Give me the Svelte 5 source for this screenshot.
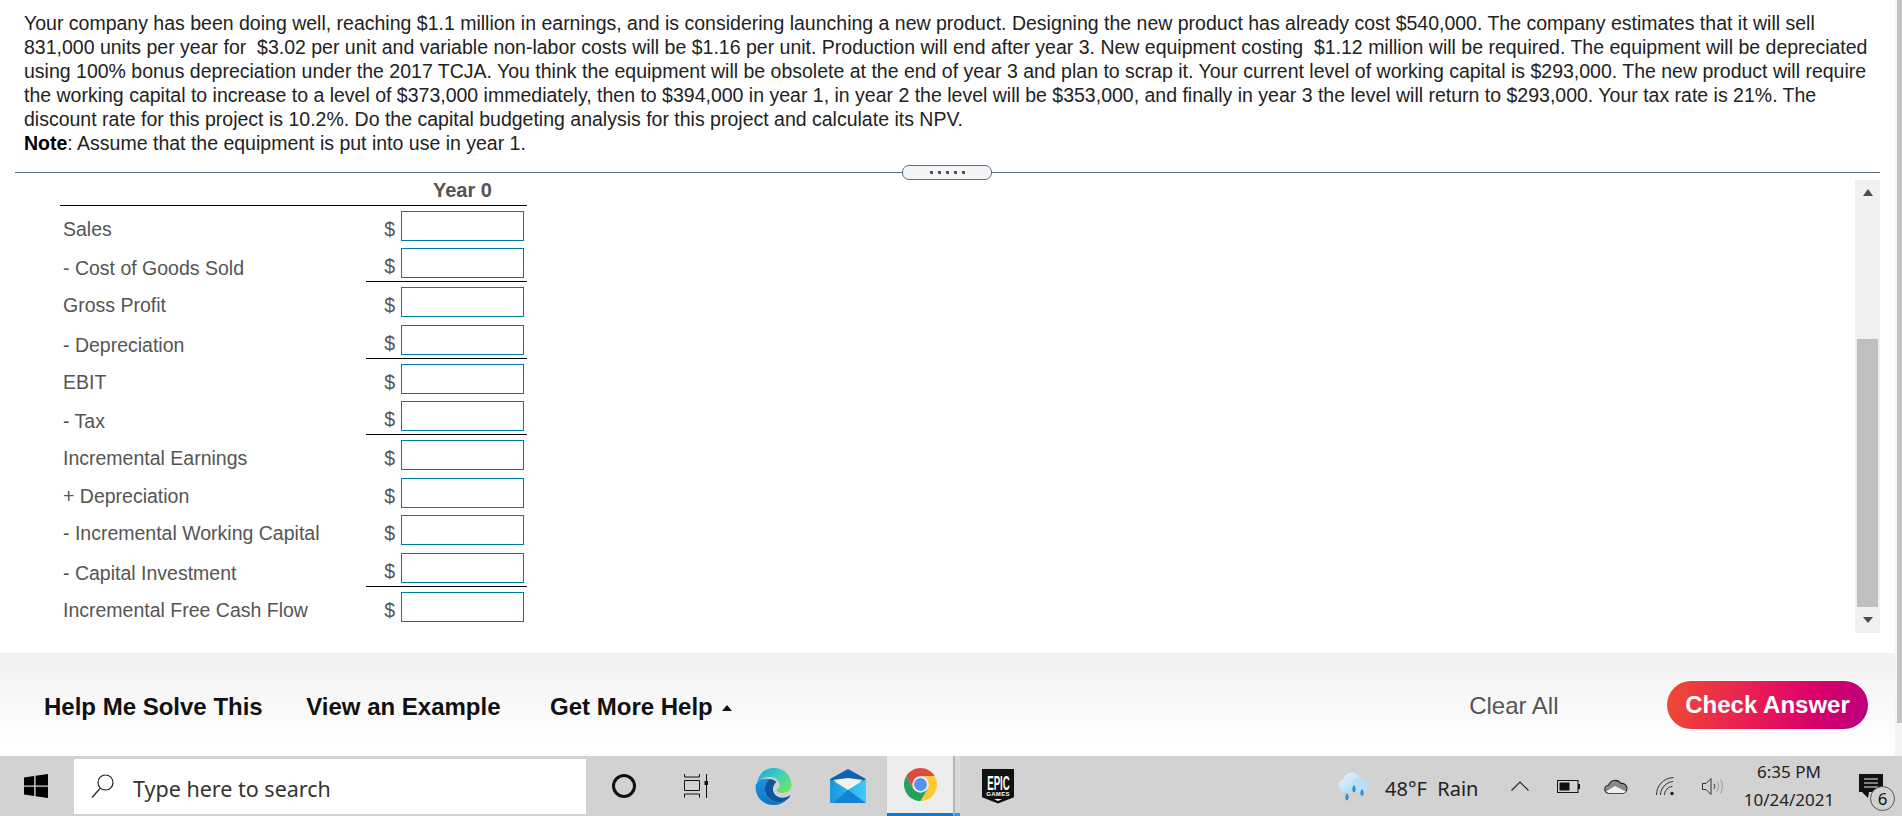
<script>
  const lines = [
    "Your company has been doing well, reaching $1.1 million in earnings, and is considering launching a new product. Designing the new product has already cost $540,000. The company estimates that it will sell",
    "831,000 units per year for \u00a0$3.02 per unit and variable non-labor costs will be $1.16 per unit. Production will end after year 3. New equipment costing \u00a0$1.12 million will be required. The equipment will be depreciated",
    "using 100% bonus depreciation under the 2017 TCJA. You think the equipment will be obsolete at the end of year 3 and plan to scrap it. Your current level of working capital is $293,000. The new product will require",
    "the working capital to increase to a level of $373,000 immediately, then to $394,000 in year 1, in year 2 the level will be $353,000, and finally in year 3 the level will return to $293,000. Your tax rate is 21%. The",
    "discount rate for this project is 10.2%. Do the capital budgeting analysis for this project and calculate its NPV."
  ]

  const rows = [
    { label: "Sales", h: 37 },
    { label: "- Cost of Goods Sold", h: 39, rule: true },
    { label: "Gross Profit", h: 38 },
    { label: "- Depreciation", h: 39, rule: true },
    { label: "EBIT", h: 37 },
    { label: "- Tax", h: 39, rule: true },
    { label: "Incremental Earnings", h: 38 },
    { label: "+ Depreciation", h: 37 },
    { label: "- Incremental Working Capital", h: 38 },
    { label: "- Capital Investment", h: 39, rule: true },
    { label: "Incremental Free Cash Flow", h: 38 }
  ]
</script>

<div class="page">
  <main class="content">
    <section class="question">
      {#each lines as line}
        <div>{line}</div>
      {/each}
      <div><b>Note</b>: Assume that the equipment is put into use in year 1.</div>
    </section>

    <div class="divider">
      <div class="handle">
        {#each Array(5) as _}<i></i>{/each}
      </div>
    </div>

    <section class="work">
      <div class="table">
        <div class="head"><span>Year 0</span></div>
        {#each rows as row}
          <div class="row" class:ruled={row.rule} style="height:{row.h}px">
            <span class="label">{row.label}</span>
            <span class="cell">
              <span class="dollar">$</span>
              <input type="text" aria-label={row.label} />
            </span>
          </div>
        {/each}
      </div>

      <div class="scrollbar">
        <span class="arrow up"></span>
        <div class="track"><div class="thumb"></div></div>
        <span class="arrow down"></span>
      </div>
    </section>

    <footer class="actions">
      <a href="#help">Help Me Solve This</a>
      <a href="#example">View an Example</a>
      <a href="#more">Get More Help <span class="caret"></span></a>
      <span class="spacer"></span>
      <span class="clear">Clear All</span>
      <button class="check">Check Answer</button>
    </footer>
  </main>

  <div class="page-scroll"><div class="page-thumb"></div></div>
</div>

<nav class="taskbar">
  <svg class="win" width="24" height="24" viewBox="0 0 24 24"><path d="M0 3.400l10.200-1.400v9.400H0zM11.600 1.800L24 0v11.400H11.600zM0 12.800h10.200v9.200L0 20.600zM11.600 12.800H24V24l-12.400-1.800z" fill="#000"/></svg>
  <div class="search">
    <svg width="23" height="24" viewBox="0 0 23 24" fill="none" stroke="#222" stroke-width="1.2"><circle cx="14.500" cy="8.500" r="7.500"/><path d="M9 14.500L1 23.500"/></svg>
    <span class="search-text">Type here to search</span>
  </div>
  <span class="cortana"></span>
  <svg class="tv" width="24" height="24" viewBox="0 0 24 24" fill="none" stroke="#111" stroke-width="1"><path d="M.5 0v3h15v-3M.5 6.500h15v10H.5zM.5 23.500v-3.500h15v3.500M22.500 0v7M22.500 11v13"/><rect x="20.500" y="7" width="4" height="4" fill="#111" stroke="none"/></svg>
  <svg class="edge" width="37" height="37" viewBox="0 0 36 37">
    <defs>
      <linearGradient id="eg1" x1="0" y1="0" x2="1" y2=".8"><stop offset="0" stop-color="#1f9fdc"/><stop offset=".5" stop-color="#3dcfc0"/><stop offset="1" stop-color="#78e25e"/></linearGradient>
      <linearGradient id="eg2" x1="0" y1="0" x2=".6" y2="1"><stop offset="0" stop-color="#1a96de"/><stop offset="1" stop-color="#0f72c4"/></linearGradient>
    </defs>
    <path d="M1.500 15C3 5 10 0 18.500 0 29 0 36 8 36 17c0 5-4 8-9 8-3 0-6-1-6-3 0-1 2-1 3-3 1-4-3-10-9-10-6 0-11 2-13.500 6z" fill="url(#eg1)"/>
    <path d="M1.500 15C4 11 9 10 14 11c-5 4-6 11-3 16 3 6 12 10 20 5-3 3-8 5-13 5C7 37 0 28 0 19c0-2 .5-3 1.500-4z" fill="url(#eg2)"/>
    <path d="M14 11c-5 4-6 11-3 16 3 6 12 10 20 5 2-1 3-3 4-5-4 3-11 4-15 0-4-4-3-10 1-13-2-2-5-3-7-3z" fill="#0d559f"/>
  </svg>
  <svg class="mail" width="36" height="34" viewBox="0 0 36 34">
    <defs><linearGradient id="mg" x1="0" y1="0" x2="1" y2="0"><stop offset="0" stop-color="#1b97dc"/><stop offset="1" stop-color="#3ccdf8"/></linearGradient></defs>
    <path d="M0 10L18 0l18 10v3H0z" fill="#0b62b0"/>
    <path d="M3 11l15-2 15 2-15 10z" fill="#f3f3f3"/>
    <path d="M0 10l18 11 18-11v24H1a1 1 0 0 1-1-1z" fill="url(#mg)"/>
    <path d="M18 21L36 34H3z" fill="#1682d2"/>
  </svg>
  <div class="chrome-tab">
    <svg width="33" height="33" viewBox="0 0 34 34">
      <path d="M17 17L9.600 21.300 2.300 8.500A17 17 0 0 1 31.700 8.500H17z" fill="#db4d3f"/>
      <path d="M17 17V8.500H31.700A17 17 0 0 1 17 34L24.400 21.300z" fill="#fcc934"/>
      <path d="M17 17L24.400 21.300 17 34A17 17 0 0 1 2.300 8.500L9.600 21.300z" fill="#1fa35f"/>
      <circle cx="17" cy="17" r="8.500" fill="#f1f1f1"/>
      <circle cx="17" cy="17" r="6.600" fill="#5b8ff0"/>
    </svg>
  </div>
  <div class="tab-edge"></div>
  <div class="epic">
    <span class="epic-name">EPIC</span>
    <span class="epic-sub">GAMES</span>
    <span class="epic-mark"></span>
  </div>

  <span class="spacer"></span>

  <svg class="cloud" width="32" height="30" viewBox="0 0 32 30">
    <defs><linearGradient id="cg" x1="0" y1="0" x2="1" y2="1"><stop offset="0" stop-color="#e8f5fd"/><stop offset="1" stop-color="#a5d4f4"/></linearGradient></defs>
    <path d="M7 21a6.500 6.500 0 0 1-1.500-12.800A8.500 8.500 0 0 1 21 5.500a6.500 6.500 0 0 1 5 3 6.500 6.500 0 0 1 0 12.500z" fill="url(#cg)"/>
    <path d="M14 15a7 7 0 0 1 12-6.500A6.500 6.500 0 0 1 26 21H13a3 3 0 0 1 1-6z" fill="#b9def7"/>
    <path d="M9 22c2 2.500 2.500 6.500 0 7.500-2.500-1-2-5 0-7.500zM16 14c2 2.500 2.500 6.500 0 7.500-2.500-1-2-5 0-7.500zM24 18c2 2.500 2.500 6 0 7-2.500-1-2-4.500 0-7z" fill="#2f8fd8"/>
  </svg>
  <span class="weather">48°F&nbsp; Rain</span>
  <svg class="chev" width="18" height="10" viewBox="0 0 18 10" fill="none" stroke="#222" stroke-width="1.100"><path d="M.5 9.500L9 1l8.500 8.500"/></svg>
  <svg class="batt" width="23" height="13" viewBox="0 0 23 13"><rect x=".5" y=".5" width="20.500" height="12" fill="none" stroke="#111"/><rect x="2.500" y="2.500" width="10" height="8" fill="#111"/><rect x="21" y="4" width="2" height="5" fill="#111"/></svg>
  <svg class="drive" width="24" height="16" viewBox="0 0 24 16"><path d="M5 15.300a4 4 0 0 1-.5-8A7 7 0 0 1 17 5.500a5 5 0 0 1 2 9.800z" fill="#8a8a8a" stroke="#222" stroke-width="1.100"/><path d="M2 13.500l9-5.500 5 2.500 6 3-2 1.500H5z" fill="#efefef"/></svg>
  <svg class="wifi" width="18" height="18" viewBox="0 0 18 18" fill="none" stroke="#333" stroke-width="1"><path d="M.5 18C.5 9 7 1 17.500.5M4.500 18C4.500 11.500 10 5 17 4.500M8.500 18c0-4 3.500-8.500 8-8.500"/><circle cx="16" cy="16.500" r="1.700" fill="#222" stroke="none"/></svg>
  <svg class="vol" width="22" height="19" viewBox="0 0 22 19" fill="none" stroke="#333" stroke-width="1"><path d="M.5 6.500h3.500l5-5v16l-5-5H.5z"/><path d="M12 7c1 1.500 1 3.500 0 5"/><path d="M15 4.500c2 3 2 7 0 10M18.500 2.500c2.500 4 2.500 10 0 14" stroke="#999"/></svg>
  <div class="clock"><div>6:35 PM</div><div>10/24/2021</div></div>
  <div class="notify">
    <svg width="24" height="24" viewBox="0 0 24 24"><path d="M0 0h24v18H10l-1 6-6-6H0z" fill="#111"/><path d="M5 5h14M5 9h14M5 13h14" stroke="#eee" stroke-width="1"/></svg>
    <span class="badge">6</span>
  </div>
</nav>

<style>
  :global(body) {
    margin: 0;
    background: #fff;
    overflow: hidden;
  }
  .page {
    display: flex;
    height: 756px;
    font-family: "Liberation Sans", Arial, sans-serif;
  }
  .content {
    flex: 1;
    display: flex;
    flex-direction: column;
    min-width: 0;
  }
  .question {
    padding: 11px 0 0 24px;
    height: 161px;
    box-sizing: border-box;
    font-size: 19.500px;
    line-height: 24px;
    color: #222;
    white-space: nowrap;
  }
  .question b {
    color: #000;
  }
  .divider {
    position: relative;
    margin: 11px 15px 0 15px;
    height: 1px;
    background: #5c6f7f;
  }
  .handle {
    position: absolute;
    left: 887px;
    top: -7px;
    width: 90px;
    height: 15px;
    box-sizing: border-box;
    background: #f3f4f6;
    border: 1px solid #5c6f7f;
    border-radius: 7px;
    display: flex;
    justify-content: center;
    align-items: center;
    gap: 5px;
  }
  .handle i {
    width: 3px;
    height: 3px;
    background: #4d5560;
  }
  .work {
    flex: 1;
    display: flex;
    justify-content: space-between;
    padding: 7px 15px 0 60px;
    min-height: 0;
  }
  .table {
    width: 467px;
  }
  .head {
    height: 25px;
    border-bottom: 1px solid #000;
    font-weight: bold;
    font-size: 20px;
    color: #555;
    line-height: 20px;
    padding-left: 373px;
  }
  .row {
    display: flex;
    justify-content: space-between;
    font-size: 19.500px;
    color: #555;
  }
  .label {
    padding: 12px 0 0 3px;
    line-height: 22px;
  }
  .ruled .label {
    padding-top: 14px;
  }
  .cell {
    width: 161px;
    box-sizing: border-box;
    display: flex;
    justify-content: flex-end;
    gap: 6px;
    padding: 5px 3px 0 0;
    height: 100%;
  }
  .ruled .cell {
    border-bottom: 1px solid #000;
  }
  .dollar {
    line-height: 30px;
    margin-top: 3px;
  }
  input {
    width: 123px;
    height: 30px;
    box-sizing: border-box;
    border: 1px solid #007c9c;
    background: #fff;
    padding: 0;
    margin: 0;
  }
  .scrollbar {
    width: 25px;
    height: 453px;
    background: #f0f0f0;
    display: flex;
    flex-direction: column;
    align-items: center;
  }
  .track {
    flex: 1;
    width: 21px;
    position: relative;
  }
  .thumb {
    position: absolute;
    left: 0;
    right: 0;
    top: 137px;
    bottom: 0;
    background: #bfbfbf;
  }
  .arrow {
    width: 0;
    height: 0;
    border-left: 5.500px solid transparent;
    border-right: 5.500px solid transparent;
    flex: none;
  }
  .arrow.up {
    margin: 9px 0 6px;
    border-bottom: 7px solid #4d4d4d;
  }
  .arrow.down {
    margin: 10px 0 10px;
    border-top: 6px solid #4d4d4d;
  }
  .actions {
    height: 103px;
    box-sizing: border-box;
    background: linear-gradient(#f1f1f1, #fff 90%);
    display: flex;
    align-items: center;
    padding: 0 27px 0 44px;
    gap: 43.500px;
    font-size: 24px;
    font-weight: bold;
  }
  .actions a {
    color: #111;
    text-decoration: none;
    margin-top: 4px;
  }
  .actions a:nth-child(3) {
    margin-left: 6px;
  }
  .caret {
    display: inline-block;
    width: 0;
    height: 0;
    margin-left: 3px;
    vertical-align: 4px;
    border-left: 5.500px solid transparent;
    border-right: 5.500px solid transparent;
    border-bottom: 6px solid #111;
  }
  .spacer {
    flex: 1;
  }
  .clear {
    font-weight: normal;
    color: #555;
    margin: 2px 65px 0 0;
  }
  .check {
    width: 201px;
    height: 48px;
    border: none;
    border-radius: 24px;
    background: linear-gradient(100deg, #ef4b32, #e5105f 55%, #d6006c 75%, #b8007f);
    color: #fff;
    font: bold 24px "Liberation Sans", Arial, sans-serif;
    padding: 0;
    box-shadow: 0 0 0 1px #fff;
  }
  .page-scroll {
    width: 7px;
    background: #f4f4f4;
    flex: none;
  }
  .page-thumb {
    margin-left: 2px;
    height: 723px;
    background: #c2c2c2;
  }
  .taskbar {
    height: 60px;
    background: #d2d2d2;
    display: flex;
    align-items: center;
    font-family: "Segoe UI", "Noto Sans", "Open Sans", sans-serif;
    color: #222;
    overflow: hidden;
  }
  .taskbar > * {
    flex: none;
  }
  .taskbar > .spacer {
    flex: 1;
  }
  .win {
    margin-left: 24px;
  }
  .search {
    margin-left: 26px;
    width: 512px;
    height: 55px;
    background: #fff;
    display: flex;
    align-items: center;
    gap: 19px;
    padding-left: 17px;
    box-sizing: border-box;
    font-size: 21.500px;
    color: #333;
  }
  .search-text {
    margin-top: 4px;
  }
  .cortana {
    width: 24px;
    height: 24px;
    box-sizing: border-box;
    border: 3px solid #111;
    border-radius: 50%;
    margin-left: 26px;
  }
  .tv {
    margin-left: 48px;
  }
  .edge {
    margin-left: 47px;
  }
  .mail {
    margin-left: 38px;
  }
  .chrome-tab {
    margin-left: 21px;
    width: 66px;
    height: 60px;
    background: #ececec;
    border-bottom: 3px solid #0a78d7;
    box-sizing: border-box;
    display: flex;
    align-items: center;
    justify-content: center;
  }
  .tab-edge {
    width: 7px;
    height: 60px;
    background: #d8d8d8;
    border-left: 2px solid #b5b5b5;
    border-bottom: 3px solid #3f94de;
    box-sizing: border-box;
  }
  .epic {
    margin-left: 22px;
    width: 32px;
    height: 35px;
    background: #111;
    color: #fff;
    display: flex;
    flex-direction: column;
    align-items: center;
    overflow: hidden;
    clip-path: polygon(0 0, 100% 0, 100% 82%, 50% 100%, 0 82%);
  }
  .epic-name {
    font: bold 21px/17px "Liberation Sans", sans-serif;
    margin-top: 5px;
    transform: scaleX(.46);
  }
  .epic-sub {
    font: bold 6px/7px "Liberation Sans", sans-serif;
    letter-spacing: .3px;
  }
  .epic-mark {
    width: 0;
    height: 0;
    margin-top: 1px;
    border-left: 4px solid transparent;
    border-right: 4px solid transparent;
    border-top: 2px solid #fff;
  }
  .weather {
    margin: 4px 0 0 15px;
    width: 93px;
    font-size: 20px;
    white-space: nowrap;
  }
  .chev {
    margin-left: 33px;
  }
  .batt {
    margin-left: 28px;
  }
  .drive {
    margin-left: 24px;
  }
  .wifi {
    margin-left: 28px;
  }
  .vol {
    margin-left: 28px;
  }
  .clock {
    margin-left: 19px;
    width: 92px;
    text-align: center;
    font-size: 17px;
    line-height: 28px;
  }
  .notify {
    position: relative;
    margin: 0 19px 0 24px;
    width: 24px;
    height: 24px;
  }
  .badge {
    position: absolute;
    left: 11px;
    top: 12px;
    width: 25px;
    height: 25px;
    box-sizing: border-box;
    border: 1px solid #555;
    border-radius: 50%;
    background: #d2d2d2;
    font-size: 17px;
    line-height: 23px;
    text-align: center;
    color: #111;
  }
</style>
